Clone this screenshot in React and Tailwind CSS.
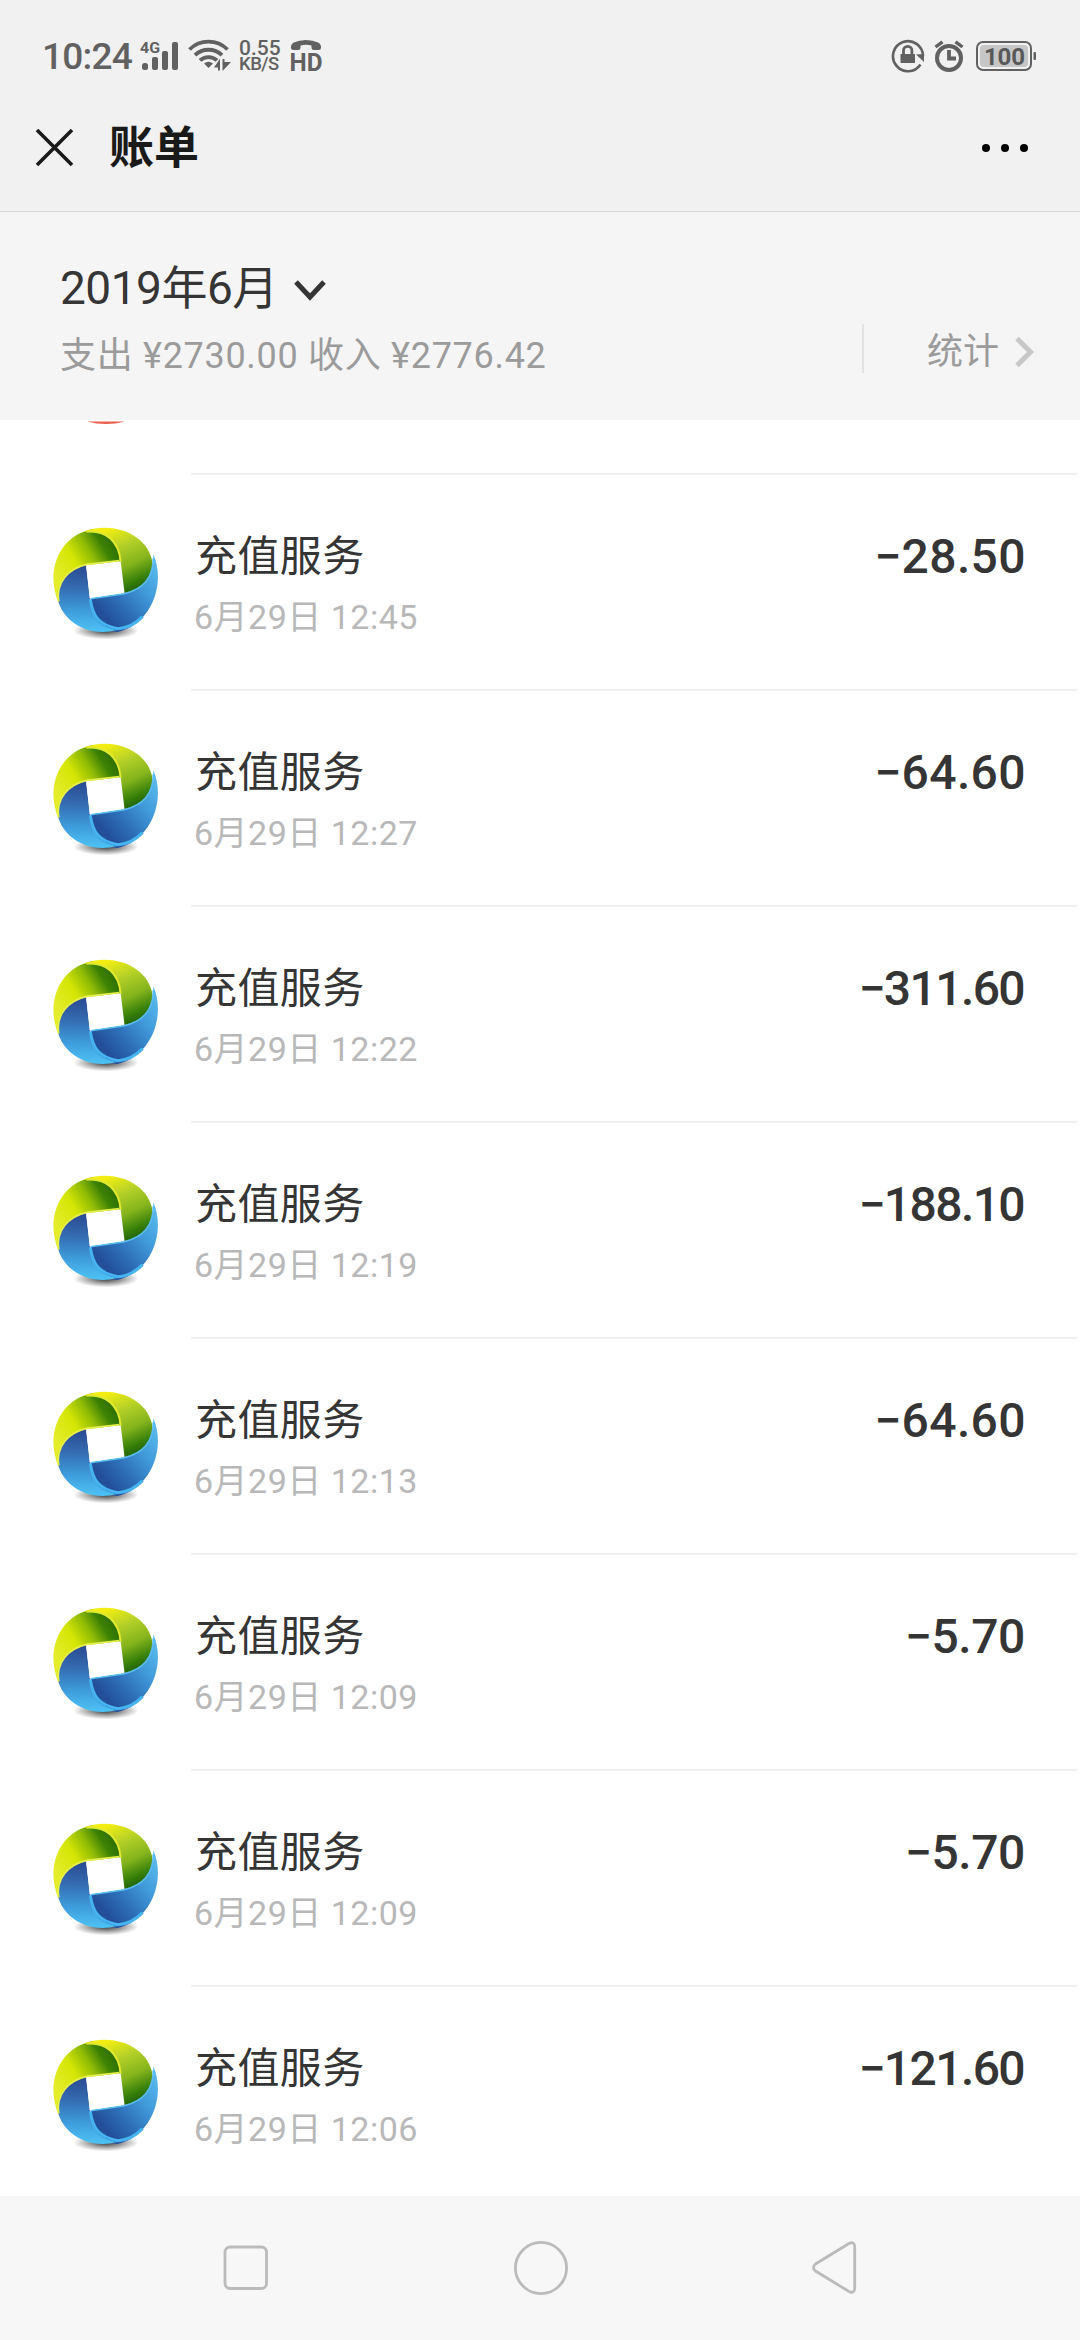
import React from 'react';

const transactions = [
  { time: '6月29日 12:45', amount: '−28.50', spacing: 'tracking-[0.4px]' },
  { time: '6月29日 12:27', amount: '−64.60', spacing: 'tracking-[0.4px]' },
  { time: '6月29日 12:22', amount: '−311.60', spacing: 'tracking-[-1.6px] mr-[2px]' },
  { time: '6月29日 12:19', amount: '−188.10', spacing: 'tracking-[-1.6px] mr-[2px]' },
  { time: '6月29日 12:13', amount: '−64.60', spacing: 'tracking-[0.4px]' },
  { time: '6月29日 12:09', amount: '−5.70', spacing: 'tracking-[-0.4px] mr-[1px]' },
  { time: '6月29日 12:09', amount: '−5.70', spacing: 'tracking-[-0.4px] mr-[1px]' },
  { time: '6月29日 12:06', amount: '−121.60', spacing: 'tracking-[-1.6px] mr-[2px]' },
];

const SignalIcon = () => (
  <svg width="40" height="30" viewBox="0 0 40 30" className="overflow-visible text-[#616161]" fill="currentColor">
    <text x="0" y="11.500" fontSize="14.500" fontWeight="700" fontFamily="Roboto, sans-serif" textLength="20" lengthAdjust="spacingAndGlyphs">4G</text>
    <rect x="2" y="22" width="6" height="7" rx="2.500" />
    <rect x="12" y="16" width="6" height="13" rx="2" />
    <rect x="22" y="10" width="6" height="19" rx="2" />
    <rect x="32" y="1" width="6" height="28" rx="2" />
  </svg>
);

const WifiIcon = () => (
  <svg width="44" height="34" viewBox="0 0 44 34" className="text-[#616161]" fill="none" stroke="currentColor" strokeWidth="3.800">
    <path d="M1.500 10.500a27 27 0 0 1 38 0" />
    <path d="M7 16.200a19.500 19.500 0 0 1 27 0" />
    <path d="M12 21.400a12.500 12.500 0 0 1 17 0" />
    <path d="M20.500 29l-4.500-4.500q4.500-3.500 9 0z" fill="currentColor" stroke="none" />
    <path d="M26 28.500l6-9v12h-2v-3z M34.500 32v-12h2v3h6.500z" fill="currentColor" stroke="none" />
  </svg>
);

const HdCallIcon = () => (
  <svg width="32" height="34" viewBox="0 0 32 34" className="overflow-visible text-[#616161]" fill="currentColor">
    <path d="M1 9V8Q1 5 4 3.500Q9 1 16 1T28 3.500Q31 5 31 8V9Q31 11 28.500 11H24Q21.500 11 21.500 9V6.500Q16 5 10.500 6.500V9Q10.500 11 8 11H3.500Q1 11 1 9z" />
    <text x="-.5" y="32" fontSize="26.500" fontWeight="700" fontFamily="Roboto, sans-serif" textLength="33" lengthAdjust="spacingAndGlyphs">HD</text>
  </svg>
);

const RotationLockIcon = () => (
  <svg width="34" height="34" viewBox="0 0 34 34" className="text-[#616161]" fill="none" stroke="currentColor">
    <path d="M29.500 25.500A15 15 0 1 1 32 17" strokeWidth="2.600" />
    <path d="M25 15.500l8-.5v8z" fill="currentColor" stroke="none" />
    <rect x="9.500" y="15" width="14.500" height="9" rx=".5" fill="currentColor" stroke="none" />
    <path d="M12.500 15.500V11.500a4.200 4.200 0 0 1 8.400 0v4" strokeWidth="2.800" />
  </svg>
);

const AlarmIcon = () => (
  <svg width="30" height="34" viewBox="0 0 30 34" className="text-[#616161]" fill="none" stroke="currentColor">
    <circle cx="15" cy="19" r="12" strokeWidth="4" />
    <path d="M15 11v8.500h7" strokeWidth="3.800" />
    <path d="M1.500 8l7-5.200M28.500 8l-7-5.200" strokeWidth="3.400" />
  </svg>
);

const BatteryIcon = () => (
  <svg width="62" height="32" viewBox="0 0 62 32">
    <rect x="2" y="2" width="54" height="28" rx="6" fill="none" stroke="#616161" strokeWidth="2" />
    <rect x="5" y="5" width="48" height="22" rx="4" fill="#c6c6c6" />
    <rect x="58.500" y="12" width="2.500" height="8" rx="1" fill="#616161" />
    <text x="29.500" y="25" textAnchor="middle" fontSize="24" fontWeight="700" fontFamily="Roboto, sans-serif" fill="#585858" textLength="41">100</text>
  </svg>
);

// Logo del comercio: anillo entrelazado verde y azul
const MerchantLogo = () => (
  <svg width="112" height="116" viewBox="54 75 336 348">
    <defs>
      <linearGradient id="lime" gradientUnits="userSpaceOnUse" x1="85" y1="240" x2="262" y2="130">
        <stop offset="0" stopColor="#e4ec2c" />
        <stop offset=".35" stopColor="#d5e605" />
        <stop offset=".6" stopColor="#8fba05" />
        <stop offset=".8" stopColor="#3d8204" />
        <stop offset="1" stopColor="#2a6a00" />
      </linearGradient>
      <linearGradient id="green" gradientUnits="userSpaceOnUse" x1="240" y1="85" x2="320" y2="272">
        <stop offset="0" stopColor="#f2ee12" />
        <stop offset=".3" stopColor="#b4d028" />
        <stop offset=".6" stopColor="#85b41c" />
        <stop offset=".85" stopColor="#38800a" />
        <stop offset="1" stopColor="#1f5f00" />
      </linearGradient>
      <linearGradient id="sky" gradientUnits="userSpaceOnUse" x1="385" y1="200" x2="215" y2="340">
        <stop offset="0" stopColor="#58b8ee" />
        <stop offset=".35" stopColor="#419bdb" />
        <stop offset=".7" stopColor="#2d6fb8" />
        <stop offset="1" stopColor="#234e98" />
      </linearGradient>
      <linearGradient id="navy" gradientUnits="userSpaceOnUse" x1="155" y1="200" x2="150" y2="390">
        <stop offset="0" stopColor="#2b4b92" />
        <stop offset=".35" stopColor="#356db2" />
        <stop offset=".7" stopColor="#3f9cdc" />
        <stop offset="1" stopColor="#4cc0f4" />
      </linearGradient>
      <radialGradient id="shade">
        <stop offset="0" stopColor="#000" stopOpacity=".8" />
        <stop offset=".6" stopColor="#000" stopOpacity=".3" />
        <stop offset="1" stopColor="#000" stopOpacity="0" />
      </radialGradient>
    </defs>
    <ellipse cx="228" cy="392" rx="98" ry="26" fill="url(#shade)" />
    <path d="M86 308C48 225 78 112 185 88C238 88 268 125 270 184L168 196C115 210 80 250 86 308z" fill="url(#lime)" />
    <path d="M160 96C240 62 348 98 366 180C372 235 345 268 284 282L272 184C268 125 228 88 160 96z" fill="url(#green)" />
    <path d="M370 162C408 250 366 372 262 396C206 388 184 352 182 296L284 280C345 268 372 230 370 162z" fill="url(#sky)" />
    <path d="M168 196L180 296C184 350 205 380 262 390C178 412 106 368 86 308C76 252 112 208 168 196z" fill="url(#navy)" />
    {/* brillos de los bordes */}
    <path d="M86 304C78 248 114 206 170 193L268 182" fill="none" stroke="#e6ee4a" strokeWidth="5" />
    <path d="M170 95C230 90 266 125 272 184" fill="none" stroke="#e2ea30" strokeWidth="6" />
    <path d="M181 298C188 350 208 376 264 386C300 384 322 366 338 350" fill="none" stroke="#45b4f0" strokeWidth="9" />
    <path d="M370 175C370 230 345 266 284 281L182 296" fill="none" stroke="#5bbcf0" strokeWidth="5" />
    <path d="M169 198L267 185L282 279L179 294z" fill="#fff" />
  </svg>
);

const TransactionRow = ({ time, amount, spacing }) => (
  <div className="flex h-[216px] shrink-0">
    <div className="w-[191px] shrink-0 pl-[48px] pt-[52px]">
      <MerchantLogo />
    </div>
    <div className="mr-[3px] flex flex-1 justify-between border-t-2 border-[#f0f0f0] pl-1 pr-[51px]">
      <div className="pt-[50px]">
        <p className="text-[42px] leading-[64px] tracking-[0.4px] text-[#353535]">充值服务</p>
        <p className="-ml-[1px] mt-[1px] text-[34px] leading-[54px] tracking-[0.5px] text-[#b8b8b8]">{time}</p>
      </div>
      <p className={`pt-[50px] text-[48px] font-medium leading-[64px] text-[#353535] ${spacing}`}>{amount}</p>
    </div>
  </div>
);

const App = () => {
  return (
    <div className="flex h-[2340px] w-[1080px] flex-col overflow-hidden bg-white font-['Roboto','Noto_Sans_CJK_SC',sans-serif]">
      {/* Barra de estado y título */}
      <header className="h-[212px] shrink-0 border-b border-[#d6d6d6] bg-[#f1f1f1]">
        <div className="flex h-[112px] items-center justify-between pl-[42px] pr-[43px]">
          <div className="flex items-center text-[#616161]">
            <span className="w-[98px] text-[37px] font-medium leading-none tracking-[-0.8px]">10:24</span>
            <SignalIcon />
            <span className="ml-[8px]"><WifiIcon /></span>
            <div className="ml-[7px] w-[51px] font-medium">
              <p className="text-[21px] leading-[17px]">0.55</p>
              <p className="text-[18.500px] leading-[15px] tracking-[-0.5px]">KB/S</p>
            </div>
            <HdCallIcon />
          </div>
          <div className="flex items-center">
            <RotationLockIcon />
            <span className="ml-[9px]"><AlarmIcon /></span>
            <span className="ml-[11px]"><BatteryIcon /></span>
          </div>
        </div>
        <div className="flex h-[70px] items-center pl-[35px] pr-[52px]">
          <svg width="39" height="39" viewBox="0 0 39 39" fill="none" stroke="#1a1a1a" strokeWidth="3.600">
            <path d="M2 2l35 35M37 2L2 37" />
          </svg>
          <h1 className="ml-[35px] mt-[3px] text-[45px] font-bold leading-none text-[#1a1a1a]">账单</h1>
          <div className="ml-auto mt-[2px] flex gap-[11px]">
            <span className="size-2 rounded-full bg-black" />
            <span className="size-2 rounded-full bg-black" />
            <span className="size-2 rounded-full bg-black" />
          </div>
        </div>
      </header>

      {/* Resumen del mes */}
      <section className="flex h-[208px] shrink-0 justify-between bg-[#f5f5f5] pl-[60px] pr-[45px]">
        <div className="pt-[43px]">
          <div className="flex items-center text-[46px] leading-[66px] tracking-[-0.5px] text-[#353535]">
            2019年6月
            <svg width="32" height="24" viewBox="0 0 32 24" className="ml-[16px] mt-[5px]" fill="none" stroke="currentColor" strokeWidth="5">
              <path d="M2 3l14 15L30 3" />
            </svg>
          </div>
          <p className="mt-[5px] whitespace-pre text-[36px] leading-[60px] tracking-[0.7px] text-[#9b9b9b]">支出 ¥2730.00 收入 ¥2776.42</p>
        </div>
        <div className="mt-[112px] flex h-[49px] items-center border-l-2 border-[#e2e2e2] pl-[63px] text-[36px] text-[#9b9b9b]">
          <span className="mt-[7px]">统计</span>
          <svg width="20" height="32" viewBox="0 0 20 32" className="ml-[16px] mt-[6px]" fill="none" stroke="#c7c7c7" strokeWidth="5">
            <path d="M2 2.500L15.500 16L2 29.500" />
          </svg>
        </div>
      </section>

      <main className="flex h-[1776px] shrink-0 flex-col overflow-hidden">
        <div className="flex h-[53px] shrink-0 pl-[86px]">
          <svg width="40" height="5" viewBox="0 0 40 5">
            <path d="M1 1.500Q20 6.500 39 1.500z" fill="#e8604f" />
          </svg>
        </div>
        {transactions.map((item, i) => (
          <TransactionRow key={i} {...item} />
        ))}
      </main>

      {/* Botones del sistema */}
      <nav className="flex h-[144px] items-center justify-between bg-[#f7f7f7] pl-[223px] pr-[222px]">
        <svg width="46" height="56" viewBox="0 0 46 56" fill="none" stroke="#bbb" strokeWidth="2.800">
          <rect x="2" y="7" width="41.500" height="41.500" rx="5" />
        </svg>
        <svg width="56" height="56" viewBox="0 0 56 56" fill="none" stroke="#bbb" strokeWidth="2.800">
          <circle cx="28" cy="28" r="25.600" />
        </svg>
        <svg width="46" height="56" viewBox="0 0 46 56" fill="none" stroke="#bbb" strokeWidth="2.800">
          <path d="M37 3.500L3.500 24Q-.5 27.500 3.500 31L37 51.500Q42.700 54 42.700 48V7Q42.700 1 37 3.500z" />
        </svg>
      </nav>
    </div>
  );
};

export default App;
